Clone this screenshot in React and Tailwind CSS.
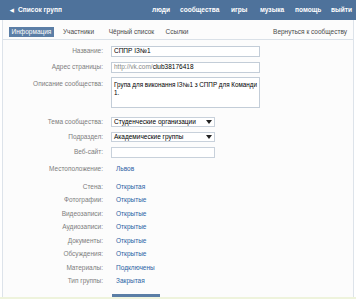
import React from "react";

const Label = ({ children, className = "" }) => (
  <div className={`w-[100px] shrink-0 text-right pr-0 text-[#7d7d7d] ${className}`}>{children}</div>
);

const Arrow = () => (
  <svg width="6" height="4" viewBox="0 0 6 4" className="shrink-0">
    <path d="M0 0 L6 0 L3 4 Z" fill="#222" />
  </svg>
);

export default function App() {
  const rows = [
    ["Стена:", "Открытая"],
    ["Фотографии:", "Открытые"],
    ["Видеозаписи:", "Открытые"],
    ["Аудиозаписи:", "Открытые"],
    ["Документы:", "Открытые"],
    ["Обсуждения:", "Открытые"],
    ["Материалы:", "Подключены"],
    ["Тип группы:", "Закрытая"],
  ];
  return (
    <div className="w-[356px] h-[299px] overflow-hidden bg-white font-['Liberation_Sans',Arial,sans-serif] text-[6.5px] leading-none">
      {/* header */}
      <div className="h-[20px] bg-[#4e729b] flex items-center text-white font-bold text-[6.6px]">
        <div className="pl-[10px] flex items-center gap-[4px]">
          <span className="text-[5px]">◀</span>
          <span>Список групп</span>
        </div>
        <div className="ml-auto flex items-center whitespace-nowrap">
          <span className="w-[28px]">люди</span>
          <span className="w-[51px]">сообщества</span>
          <span className="w-[29px]">игры</span>
          <span className="w-[35px]">музыка</span>
          <span className="w-[36px]">помощь</span>
          <span className="w-[25px]">выйти</span>
        </div>
      </div>

      {/* panel */}
      <div className="ml-[2px] w-[352px] h-[277px] overflow-hidden border-x border-[#dde3ea] bg-[#fcfcfc]">
        {/* tabs */}
        <div className="h-[20px] pt-[7px] border-b border-[#dae1e8] flex items-start pl-[6px] pr-[6px] text-[#4a4a4a]">
          <div className="w-[45px] h-[10px] bg-[#5b7ea6] text-white flex items-center justify-center">Информация</div>
          <div className="w-[49px] h-[10px] flex items-center justify-center">Участники</div>
          <div className="w-[57px] h-[10px] flex items-center justify-center">Чёрный список</div>
          <div className="w-[34px] h-[10px] flex items-center justify-center">Ссылки</div>
          <div className="ml-auto h-[10px] flex items-center">Вернуться к сообществу</div>
        </div>

        {/* form */}
        <div className="pt-[6px]">
          <div className="flex items-center h-[11px]">
            <Label>Название:</Label>
            <div className="ml-[8px] w-[149px] h-[11px] border border-[#c3cdd8] bg-white flex items-center px-[2px] text-black">СППР ІЗ№1</div>
          </div>
          <div className="flex items-center h-[11px] mt-[5px]">
            <Label>Адрес страницы:</Label>
            <div className="ml-[8px] w-[149px] h-[11px] border border-[#c3cdd8] bg-white flex items-center px-[2px] text-black">
              <span className="text-[#888]">http://vk.com/</span>club38176418
            </div>
          </div>
          <div className="flex items-start h-[31px] mt-[4px]">
            <Label className="pt-[4px]">Описание сообщества:</Label>
            <div className="ml-[8px] w-[149px] h-[31px] border border-[#c3cdd8] bg-white pl-[2px] pr-[1px] pt-[3px] text-black text-[6.3px] leading-[7.5px]">
              Група для виконання ІЗ№1 з СППР для Команди 1.
            </div>
          </div>
          <div className="flex items-center h-[10px] mt-[9px]">
            <Label>Тема сообщества:</Label>
            <div className="ml-[8px] w-[104px] h-[10px] border border-[#c8d1db] bg-white flex items-center px-[2px] text-black">
              <span className="flex-1">Студенческие организации</span>
              <Arrow />
            </div>
          </div>
          <div className="flex items-center h-[10px] mt-[5px]">
            <Label>Подраздел:</Label>
            <div className="ml-[8px] w-[104px] h-[10px] border border-[#c8d1db] bg-white flex items-center px-[2px] text-black">
              <span className="flex-1">Академические группы</span>
              <Arrow />
            </div>
          </div>
          <div className="flex items-center h-[11px] mt-[5px]">
            <Label>Веб-сайт:</Label>
            <div className="ml-[8px] w-[104px] h-[11px] border border-[#c8d1db] bg-white"></div>
          </div>
          <div className="flex items-center h-[10px] mt-[6px]">
            <Label>Местоположение:</Label>
            <div className="ml-[13px] text-[#2a62a3]">Львов</div>
          </div>
          <div className="mt-[6px]">
            {rows.map(([l, v]) => (
              <div key={l} className="flex items-center h-[13.5px]">
                <Label>{l}</Label>
                <div className="ml-[13px] text-[#2a62a3]">{v}</div>
              </div>
            ))}
          </div>
          <div className="ml-[109px] mt-[6px] w-[48px] h-[10px] bg-[#5b7ea6]"></div>
        </div>
      </div>
      <div className="h-[2px] bg-[#eef3dc]"></div>
    </div>
  );
}
